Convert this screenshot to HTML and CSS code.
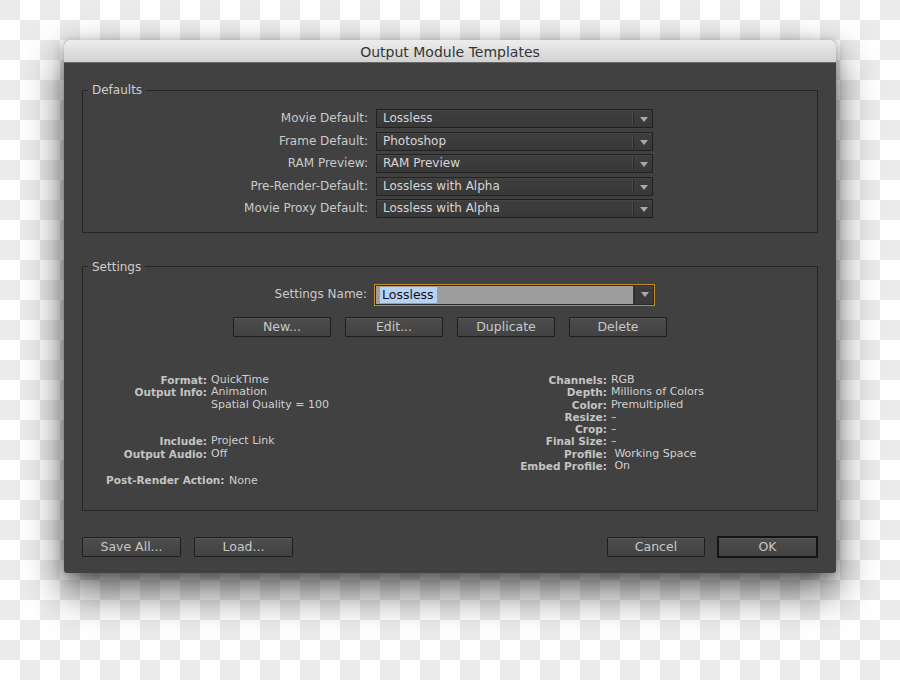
FILE: index.html
```html
<!DOCTYPE html>
<html lang="en">
<head>
<meta charset="utf-8">
<title>Output Module Templates</title>
<link rel="stylesheet" href="styles.css">
</head>
<body>
<div class="dialog">
  <div class="titlebar">Output Module Templates</div>
  <div class="content">
    <fieldset class="group defaults">
      <legend>Defaults</legend>
      <div class="form-grid">
        <span class="lbl">Movie Default:</span>
        <div class="select"><span class="val">Lossless</span><span class="arrow"></span></div>
        <span class="lbl">Frame Default:</span>
        <div class="select"><span class="val">Photoshop</span><span class="arrow"></span></div>
        <span class="lbl">RAM Preview:</span>
        <div class="select"><span class="val">RAM Preview</span><span class="arrow"></span></div>
        <span class="lbl">Pre-Render-Default:</span>
        <div class="select"><span class="val">Lossless with Alpha</span><span class="arrow"></span></div>
        <span class="lbl">Movie Proxy Default:</span>
        <div class="select"><span class="val">Lossless with Alpha</span><span class="arrow"></span></div>
      </div>
    </fieldset>

    <fieldset class="group settings">
      <legend>Settings</legend>
      <div class="form-grid name-row">
        <span class="lbl">Settings Name:</span>
        <div class="select editable"><span class="val"><span class="sel">Lossless</span></span><span class="arrow"></span></div>
      </div>
      <div class="btn-row">
        <button class="btn">New...</button>
        <button class="btn">Edit...</button>
        <button class="btn">Duplicate</button>
        <button class="btn">Delete</button>
      </div>
      <div class="info">
        <div class="info-col left">
          <span class="k">Format:</span><span class="v">QuickTime</span>
          <span class="k">Output Info:</span><span class="v">Animation</span>
          <span class="k"></span><span class="v">Spatial Quality = 100</span>
          <span class="k gap"></span><span class="v gap"></span>
          <span class="k">Include:</span><span class="v">Project Link</span>
          <span class="k">Output Audio:</span><span class="v">Off</span>
        </div>
        <div class="info-col right">
          <span class="k">Channels:</span><span class="v">RGB</span>
          <span class="k">Depth:</span><span class="v">Millions of Colors</span>
          <span class="k">Color:</span><span class="v">Premultiplied</span>
          <span class="k">Resize:</span><span class="v">–</span>
          <span class="k">Crop:</span><span class="v">–</span>
          <span class="k">Final Size:</span><span class="v">–</span>
          <span class="k">Profile:</span><span class="v">&nbsp;Working Space</span>
          <span class="k">Embed Profile:</span><span class="v">&nbsp;On</span>
        </div>
      </div>
      <div class="post"><span class="k">Post-Render Action:</span> <span class="v">None</span></div>
    </fieldset>

    <div class="footer">
      <div class="btn-group">
        <button class="btn wide">Save All...</button>
        <button class="btn wide">Load...</button>
      </div>
      <div class="btn-group right">
        <button class="btn">Cancel</button>
        <button class="btn default">OK</button>
      </div>
    </div>
  </div>
</div>
</body>
</html>
```

FILE: styles.css
```css
* { box-sizing: border-box; }

html, body {
  margin: 0;
  padding: 0;
}

body {
  width: 900px;
  height: 680px;
  overflow: hidden;
  font-family: "DejaVu Sans", "Noto Sans", sans-serif;
  background-color: #ffffff;
  background-image: conic-gradient(#ffffff 25%, #ebebeb 0 50%, #ffffff 0 75%, #ebebeb 0);
  background-size: 40px 40px;
  padding: 40px 0 0 64px;
}

.dialog {
  width: 772px;
  height: 533px;
  background: #414141;
  border-radius: 5px 5px 3px 3px;
  box-shadow: 0 18px 40px rgba(0, 0, 0, 0.62), 0 3px 12px rgba(0, 0, 0, 0.3);
  display: flex;
  flex-direction: column;
}

.titlebar {
  height: 23px;
  flex: none;
  border-radius: 5px 5px 0 0;
  background: linear-gradient(#ededed, #d2d2d2);
  border-bottom: 1px solid #6a6a6a;
  color: #353535;
  font-size: 14px;
  line-height: 24px;
  text-align: center;
}

.content {
  padding: 19px 18px 0 18px;
  color: #c9c9c9;
  font-size: 12px;
  flex: 1;
  display: flex;
  flex-direction: column;
}

.group {
  margin: 0;
  padding: 0;
  border: 1px solid #262626;
  min-inline-size: 0;
}

.group legend {
  margin-left: 5px;
  padding: 0 4px;
  font-size: 12px;
  line-height: 16px;
  color: #cdcdcd;
}

.defaults {
  height: 151px;
  padding-top: 11px;
}

.settings {
  margin-top: 25.5px;
  height: 252.5px;
  padding-top: 10px;
}

.form-grid {
  display: grid;
  grid-template-columns: 285px 277px;
  column-gap: 8px;
  row-gap: 3.5px;
  align-items: center;
}

.lbl {
  text-align: right;
  line-height: 19px;
  color: #cacaca;
  white-space: nowrap;
}

.select {
  height: 19px;
  display: flex;
  align-items: stretch;
  border: 1px solid #212121;
  background: linear-gradient(#3e3e3e, #383838);
  box-shadow: inset 0 1px 0 rgba(255, 255, 255, 0.04);
}

.select .val {
  flex: 1;
  padding-left: 6px;
  line-height: 17px;
  color: #d6d6d6;
  white-space: nowrap;
}

.select .arrow {
  width: 19px;
  flex: none;
  border-left: 1px solid #2a2a2a;
  box-shadow: -1px 0 0 #4a4a4a;
  position: relative;
  margin: 2px 0;
}

.select .arrow::after {
  content: "";
  position: absolute;
  left: 6px;
  top: 5px;
  border-left: 4px solid transparent;
  border-right: 4px solid transparent;
  border-top: 5px solid #a9a9a9;
}

.name-row {
  grid-template-columns: 284px 279px;
}

.select.editable {
  height: 20px;
  outline: 1px solid #c28a22;
  outline-offset: 0;
  border-color: #2a2a2a;
  background: linear-gradient(to right, #9d9d9d calc(100% - 20px), #3b3b3b 0);
}

.select.editable .val {
  padding-left: 4px;
  padding-top: 1px;
  line-height: 16px;
}

.select.editable .sel {
  display: inline-block;
  background: #b7d2f0;
  color: #111;
  padding: 0 3px 0 2px;
  font-size: 12.5px;
  line-height: 16px;
}

.select.editable .arrow {
  margin: 0;
  border-left-color: #2a2a2a;
  box-shadow: none;
}

.select.editable .arrow::after {
  top: 6px;
}

.btn-row {
  margin-top: 12.5px;
  display: flex;
  justify-content: center;
  gap: 14px;
}

.btn {
  width: 98px;
  height: 20px;
  padding: 0;
  border: 1px solid #1f1f1f;
  border-radius: 1px;
  background: linear-gradient(#4d4d4d, #424242);
  box-shadow: inset 0 1px 0 rgba(255, 255, 255, 0.06);
  color: #c8c8c8;
  font-family: "DejaVu Sans", "Noto Sans", sans-serif;
  font-size: 12.5px;
  line-height: 18px;
}

.btn.wide {
  width: 99px;
}

.btn.default {
  width: 101px;
  height: 22px;
  border: 2px solid #141414;
}

.info {
  margin-top: 37px;
  display: flex;
  font-size: 11px;
  line-height: 12.3px;
}

.info-col {
  display: grid;
  column-gap: 4px;
  align-content: start;
}

.info-col.left {
  padding-left: 24px;
  grid-template-columns: 100px max-content;
}

.info-col.right {
  margin-left: 178px;
  grid-template-columns: 100px max-content;
}

.k {
  text-align: right;
  font-weight: bold;
  font-size: 10.5px;
  color: #c4c4c4;
  white-space: nowrap;
}

.v {
  color: #d0d0d0;
  white-space: nowrap;
}

.gap {
  height: 24.6px;
}

.post {
  margin-top: 2px;
  padding-left: 23px;
  font-size: 11px;
  line-height: 12.3px;
}

.post .v {
  margin-left: 1px;
}

.footer {
  margin-top: 25px;
  display: flex;
  justify-content: space-between;
  align-items: center;
}

.btn-group {
  display: flex;
  gap: 13px;
  align-items: center;
}

.btn-group.right {
  gap: 12px;
}
```
